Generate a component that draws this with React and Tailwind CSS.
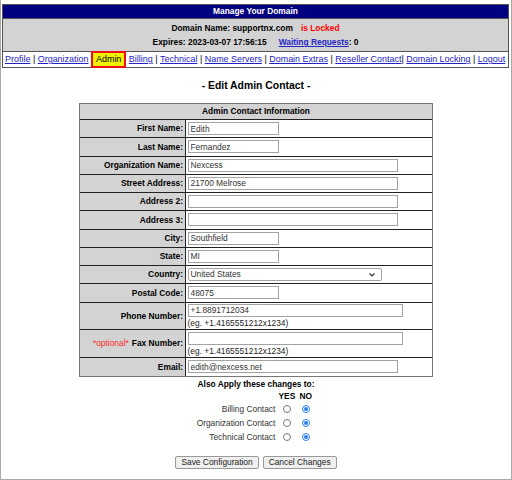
import React from "react";

const link = "text-[#2323c4] underline decoration-[#2323c4]";

function TextInput({ value = "", w }) {
  return (
    <input
      readOnly
      value={value}
      className={`h-[13px] ${w} border border-[#a3a3a3] bg-white px-[2px] text-[8.4px] leading-[11px] text-[#333] outline-none`}
    />
  );
}

const rows = [
  { label: "First Name:", h: "h-[18.25px]", kind: "input", value: "Edith", w: "w-[91px]" },
  { label: "Last Name:", h: "h-[18.25px]", kind: "input", value: "Fernandez", w: "w-[91px]" },
  { label: "Organization Name:", h: "h-[18.25px]", kind: "input", value: "Nexcess", w: "w-[210px]" },
  { label: "Street Address:", h: "h-[18.25px]", kind: "input", value: "21700 Melrose", w: "w-[210px]" },
  { label: "Address 2:", h: "h-[18.25px]", kind: "input", value: "", w: "w-[210px]" },
  { label: "Address 3:", h: "h-[18.25px]", kind: "input", value: "", w: "w-[210px]" },
  { label: "City:", h: "h-[18.25px]", kind: "input", value: "Southfield", w: "w-[91px]" },
  { label: "State:", h: "h-[18.25px]", kind: "input", value: "MI", w: "w-[91px]" },
  { label: "Country:", h: "h-[18.25px]", kind: "select", value: "United States" },
  { label: "Postal Code:", h: "h-[18.25px]", kind: "input", value: "48075", w: "w-[91px]" },
  { label: "Phone Number:", h: "h-[27.7px]", kind: "phone", value: "+1.8891712034" },
  { label: "Fax Number:", h: "h-[27.7px]", kind: "phone", value: "", optional: true },
  { label: "Email:", h: "h-[19px]", kind: "input", value: "edith@nexcess.net", w: "w-[210px]" },
];

function Radio({ checked }) {
  if (checked) {
    return (
      <span className="flex h-[8px] w-[8px] items-center justify-center rounded-full border border-[#2a7ff0] bg-white">
        <span className="h-[4px] w-[4px] rounded-full bg-[#2a7ff0]" />
      </span>
    );
  }
  return <span className="block h-[8px] w-[8px] rounded-full border border-[#7a7a7a] bg-white" />;
}

export default function App() {
  return (
    <div className="h-[480px] w-[512px] overflow-hidden border-b border-l border-r border-[#a8a8a8] bg-white font-['Liberation_Sans',Arial,sans-serif] text-black">
      {/* Header table */}
      <div className="ml-[1px] mr-[2px] mt-[4px] border border-[#555]">
        <div className="h-[13px] bg-[#000080] text-center text-[8.4px] font-bold leading-[13px] text-white">
          Manage Your Domain
        </div>
        <div className="flex h-[33px] flex-col items-center justify-center border-t border-[#555] bg-[#d3d3d3] text-[8.4px] font-bold leading-[14px]">
          <div>
            <span>Domain Name: supportnx.com</span>
            <span className="ml-[8px] text-[#f00]">is Locked</span>
          </div>
          <div>
            <span>Expires: 2023-03-07 17:56:15</span>
            <span className={`ml-[12px] ${link}`}>Waiting Requests</span>
            <span>: 0</span>
          </div>
        </div>
        <div className="flex h-[16px] items-center whitespace-pre border-t border-[#555] pl-[2px] text-[8.96px] leading-[11px]">
          <span className={link}>Profile</span>
          <span> | </span>
          <span className={link}>Organization</span>
          <span> </span>
          <span className="flex h-[17px] items-center border-2 border-[#ee1111] bg-[#f0f000] px-[3px] text-black">
            Admin
          </span>
          <span> </span>
          <span className={link}>Billing</span>
          <span> | </span>
          <span className={link}>Technical</span>
          <span> | </span>
          <span className={link}>Name Servers</span>
          <span> | </span>
          <span className={link}>Domain Extras</span>
          <span> | </span>
          <span className={link}>Reseller Contact</span>
          <span>| </span>
          <span className={link}>Domain Locking</span>
          <span> | </span>
          <span className={link}>Logout</span>
        </div>
      </div>

      {/* Heading */}
      <div className="mt-[12px] text-center text-[10.4px] font-bold leading-[12px]">
        - Edit Admin Contact -
      </div>

      {/* Form table */}
      <div className="mx-auto mt-[11px] w-[354px] border border-[#777] text-[8.4px]">
        <div className="h-[15px] bg-[#d3d3d3] text-center font-bold leading-[15px]">
          Admin Contact Information
        </div>
        {rows.map((r) => (
          <div key={r.label} className={`flex border-t border-[#222] ${r.h}`}>
            <div className="flex w-[106px] shrink-0 items-center justify-end border-r border-[#222] bg-[#d3d3d3] pr-[2px] font-bold">
              {r.optional && <span className="mr-[3px] font-normal text-[#ff2a2a]">*optional*</span>}
              {r.label}
            </div>
            <div className="flex flex-1 flex-col justify-center pl-[1.5px]">
              {r.kind === "input" && <TextInput value={r.value} w={r.w} />}
              {r.kind === "select" && (
                <div className="flex h-[13px] w-[194px] items-center justify-between rounded-[2px] border border-[#a3a3a3] bg-white pl-[2px] pr-[6px] text-[#333]">
                  <span className="leading-[11px]">{r.value}</span>
                  <svg width="6" height="4" viewBox="0 0 6 4">
                    <path d="M0.5 0.5 L3 3 L5.5 0.5" fill="none" stroke="#333" strokeWidth="1.2" />
                  </svg>
                </div>
              )}
              {r.kind === "phone" && (
                <>
                  <TextInput value={r.value} w="w-[215px]" />
                  <div className="mt-[1px] leading-[10px] text-[#222]">(eg. +1.4165551212x1234)</div>
                </>
              )}
            </div>
          </div>
        ))}
      </div>

      {/* Also apply */}
      <div className="mt-[2px] text-center text-[8.4px] font-bold leading-[10px]">
        Also Apply these changes to:
      </div>
      <div className="mx-auto mt-[2px] grid w-fit grid-cols-[auto_19px_19px] text-[8.4px]">
        <div className="h-[10px]" />
        <div className="h-[10px] text-center font-bold leading-[10px]">YES</div>
        <div className="h-[10px] text-center font-bold leading-[10px]">NO</div>
        {["Billing Contact", "Organization Contact", "Technical Contact"].map((t, i) => (
          <React.Fragment key={t}>
            <div className={`flex h-[14px] items-center justify-end pr-[2px] text-[#333] ${i === 0 ? "mt-[1.5px]" : ""}`}>
              {t}
            </div>
            <div className={`flex h-[14px] items-center justify-center ${i === 0 ? "mt-[1.5px]" : ""}`}>
              <Radio checked={false} />
            </div>
            <div className={`flex h-[14px] items-center justify-center ${i === 0 ? "mt-[1.5px]" : ""}`}>
              <Radio checked />
            </div>
          </React.Fragment>
        ))}
      </div>

      {/* Buttons */}
      <div className="mt-[12px] flex justify-center gap-[4px] text-[8.4px]">
        <button className="h-[13px] rounded-[2px] border border-[#9a9a9a] bg-[#efefef] px-[5px] leading-[11px] text-[#222]">
          Save Configuration
        </button>
        <button className="h-[13px] rounded-[2px] border border-[#9a9a9a] bg-[#efefef] px-[5px] leading-[11px] text-[#222]">
          Cancel Changes
        </button>
      </div>
    </div>
  );
}
